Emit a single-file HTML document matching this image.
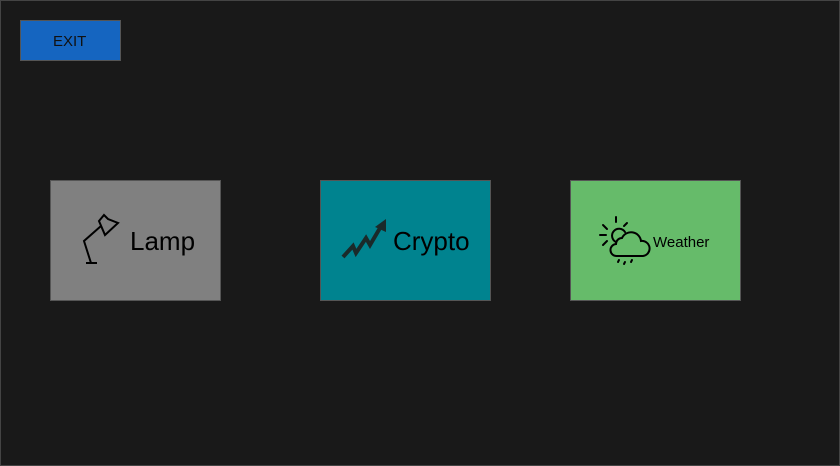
<!DOCTYPE html>
<html><head><style>
body{margin:0;width:840px;height:466px;background:#191919;overflow:hidden;font-family:"Liberation Sans",sans-serif;}
.frame{position:absolute;left:0;top:0;width:838px;height:464px;border:1px solid #444;}
.b{position:absolute;box-sizing:border-box;border:1px solid #555;}
.t{position:absolute;color:#000;white-space:nowrap;}
</style></head><body>
<div class="frame"></div>
<div class="b" style="left:20px;top:20px;width:101px;height:41px;background:#1565C0"></div>
<div class="t" style="left:53px;top:33px;font-size:15px;color:#111">EXIT</div>

<div class="b" style="left:50px;top:180px;width:171px;height:121px;background:#808080"></div>
<svg style="position:absolute;left:78px;top:212px" width="45" height="56" viewBox="78 212 45 56" fill="none" stroke="#000" stroke-width="2">
<path d="M86 263 H97 M91 263 L84 241 L101 226"/>
<path d="M99 221 L104 215 L108 219 L118 223 L105 235 Z"/>
</svg>
<div class="t" style="left:130px;top:226px;font-size:26px">Lamp</div>

<div class="b" style="left:320px;top:180px;width:171px;height:121px;background:#00838F"></div>
<svg style="position:absolute;left:340px;top:215px" width="50" height="48" viewBox="340 215 50 48">
<path d="M343 257 L353 246 L356 253 L366 238 L370 245 L380 228" stroke="#1a2a2a" stroke-width="4" fill="none"/>
<path d="M375 227 L386 219 L386 232 Z" fill="#1a2a2a"/>
</svg>
<div class="t" style="left:393px;top:226px;font-size:26px">Crypto</div>

<div class="b" style="left:570px;top:180px;width:171px;height:121px;background:#66BB6A"></div>
<svg style="position:absolute;left:596px;top:212px" width="60" height="56" viewBox="596 212 60 56" fill="none" stroke="#000" stroke-width="2" stroke-linecap="round">
<path d="M617 256 a6 6 0 0 1 -1-12 a6 6 0 0 1 6-6 a10 10 0 0 1 19 3 a7 7 0 0 1 2 15 Z"/>
<path d="M625 232 a7 7 0 1 0 -9 10"/>
<path d="M600 235 H606 M603 225 L607 229 M603 245 L607 241 M616 217 V222 M627 223 L624 226"/>
<path d="M619 260 l-1 2 M625 262 l-1 2 M632 260 l-1 2"/>
</svg>
<div class="t" style="left:653px;top:234px;font-size:15px">Weather</div>
</body></html>
